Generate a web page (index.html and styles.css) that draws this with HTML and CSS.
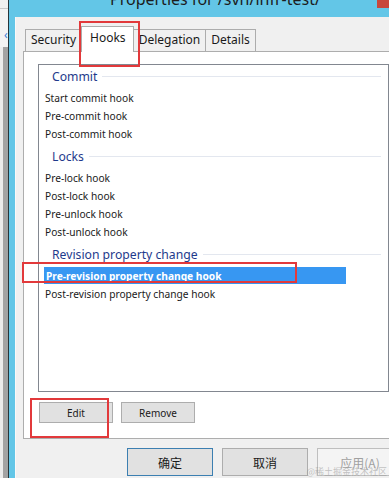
FILE: index.html
```html
<!DOCTYPE html>
<html>
<head>
<meta charset="utf-8">
<link rel="stylesheet" href="styles.css">
</head>
<body>
<div class="desk">
  <div class="desk-top"><span class="desk-arrow">‹</span></div>
  <div class="desk-bottom"></div>
</div>
<div class="win">
  <div class="titlebar">
    <span class="title">Properties for /svn/infr-test/</span>
    <span class="close"></span>
  </div>
  <div class="frame">
    <div class="client">
      <div class="tabs">
        <div class="tab">Security</div>
        <div class="tab sel">Hooks</div>
        <div class="tab">Delegation</div>
        <div class="tab">Details</div>
      </div>
      <div class="panel">
        <div class="listbox">
          <div class="group first"><span>Commit</span><i></i></div>
          <div class="item">Start commit hook</div>
          <div class="item">Pre-commit hook</div>
          <div class="item">Post-commit hook</div>
          <div class="group"><span>Locks</span><i></i></div>
          <div class="item">Pre-lock hook</div>
          <div class="item">Post-lock hook</div>
          <div class="item">Pre-unlock hook</div>
          <div class="item">Post-unlock hook</div>
          <div class="group"><span>Revision property change</span><i></i></div>
          <div class="item selected">Pre-revision property change hook</div>
          <div class="item">Post-revision property change hook</div>
        </div>
        <div class="panel-buttons">
          <button class="btn small">Edit</button>
          <button class="btn small">Remove</button>
        </div>
      </div>
      <div class="dlg-buttons">
        <button class="btn big default">确定</button>
        <button class="btn big">取消</button>
        <button class="btn big disabled">应用(A)</button>
      </div>
    </div>
  </div>
</div>
<div class="mark mark-tab"></div>
<div class="mark mark-sel"></div>
<div class="mark mark-edit"></div>
<div class="watermark">@稀土掘金技术社区</div>
</body>
</html>
```

FILE: styles.css
```css
html, body {
  margin: 0;
  padding: 0;
}
body {
  width: 389px;
  height: 478px;
  overflow: hidden;
  display: flex;
  position: relative;
  font-family: "Noto Sans", "Noto Sans CJK SC", sans-serif;
  color: #1a1a1a;
  background: #f0f0f0;
}
.desk {
  width: 8px;
  display: flex;
  flex-direction: column;
}
.desk-top {
  height: 38px;
  margin-top: 8px;
  border-top: 1px solid #c8c8c8;
  background: #f3f3f3;
  position: relative;
  overflow: hidden;
}
.desk-arrow {
  position: absolute;
  left: 4px;
  top: 20px;
  font-size: 12px;
  line-height: 12px;
  color: #3a7bd5;
}
.desk-bottom {
  flex: 1;
  background: linear-gradient(to right, #ececec 3px, #a3a3a3 3px);
}
.win {
  flex: 1;
  display: flex;
  flex-direction: column;
  border-left: 1px solid #27343a;
  background: #63c6e7;
  min-width: 0;
}
.titlebar {
  height: 17px;
  display: flex;
  overflow: hidden;
}
.title {
  font-size: 16px;
  line-height: 20px;
  margin-top: -11px;
  margin-left: 101px;
  white-space: nowrap;
  color: #1c1c1c;
}
.close {
  margin-left: auto;
  width: 12px;
  height: 8px;
  background: #c8473c;
}
.frame {
  flex: 1;
  display: flex;
  padding-left: 6px;
  min-height: 0;
}
.client {
  flex: 1;
  background: #f0f0f0;
  border-left: 1px solid #f9f9f9;
  display: flex;
  flex-direction: column;
  min-width: 0;
}
.tabs {
  display: flex;
  align-items: flex-end;
  height: 25px;
  margin-top: 9px;
  margin-left: 9px;
  position: relative;
  z-index: 2;
}
.tab {
  height: 21px;
  line-height: 20px;
  border: 1px solid #acacac;
  border-bottom: none;
  background: #f0f0f0;
  font-size: 12px;
  padding: 0 5px;
  margin-left: -1px;
  box-sizing: content-box;
}
.tab:first-child {
  margin-left: 0;
}
.tab.sel {
  height: 25px;
  line-height: 22px;
  margin-bottom: -1px;
  background: #ffffff;
  padding: 0 7px 0 8px;
}
.panel {
  margin-left: 7px;
  margin-right: -6px;
  height: 386px;
  border: 1px solid #adadad;
  background: #ffffff;
  display: flex;
  flex-direction: column;
  position: relative;
  z-index: 1;
}
.listbox {
  width: 344px;
  height: 326px;
  margin-top: 12px;
  margin-left: 14px;
  border: 1px solid #828790;
  background: #ffffff;
  padding-left: 5px;
  box-sizing: content-box;
  overflow: hidden;
}
.group {
  height: 26px;
  display: flex;
  align-items: center;
  padding-left: 8px;
  padding-right: 6px;
  color: #1e3a8c;
  font-size: 12.2px;
}
.group.first {
  margin-top: -2px;
}
.group i {
  flex: 1;
  height: 1px;
  margin-left: 5px;
  margin-right: 1px;
  background: #e3e7ef;
}
.item {
  width: 300px;
  height: 18px;
  line-height: 18px;
  padding-left: 1px;
  font-size: 10.2px;
  white-space: nowrap;
}
.item.selected {
  background: #3797f2;
  color: #ffffff;
  font-weight: bold;
  height: 17px;
  margin-bottom: 1px;
  padding-left: 2px;
  width: 300px;
}
.panel-buttons {
  display: flex;
  gap: 8px;
  margin-top: 10px;
  margin-left: 15px;
}
.btn {
  font-family: "Noto Sans", "Noto Sans CJK SC", sans-serif;
  background: #e1e1e1;
  border: 1px solid #adadad;
  color: #1a1a1a;
  padding: 0;
  margin: 0;
}
.btn.small {
  width: 74px;
  height: 21px;
  font-size: 10px;
}
.dlg-buttons {
  display: flex;
  gap: 9px;
  margin-top: 9px;
  margin-left: 111px;
}
.btn.big {
  flex: none;
  width: 86px;
  height: 28px;
  font-size: 12px;
  font-family: "Noto Sans CJK SC", sans-serif;
}
.btn.default {
  border-color: #3c7fb1;
}
.btn.disabled {
  background: #f4f4f4;
  border-color: #bfbfbf;
  color: #a0a0a0;
}
.mark {
  position: absolute;
  border: 2px solid #e2393b;
  box-sizing: border-box;
  z-index: 5;
}
.mark-tab {
  left: 79px;
  top: 21px;
  width: 61px;
  height: 46px;
}
.mark-sel {
  left: 22px;
  top: 262px;
  width: 275px;
  height: 21px;
}
.mark-edit {
  left: 30px;
  top: 398px;
  width: 79px;
  height: 40px;
}
.watermark {
  position: absolute;
  right: 2px;
  bottom: 1px;
  font-family: "Noto Sans CJK SC", sans-serif;
  font-size: 9px;
  line-height: 11px;
  color: rgba(150, 150, 150, 0.55);
  z-index: 6;
}
```
